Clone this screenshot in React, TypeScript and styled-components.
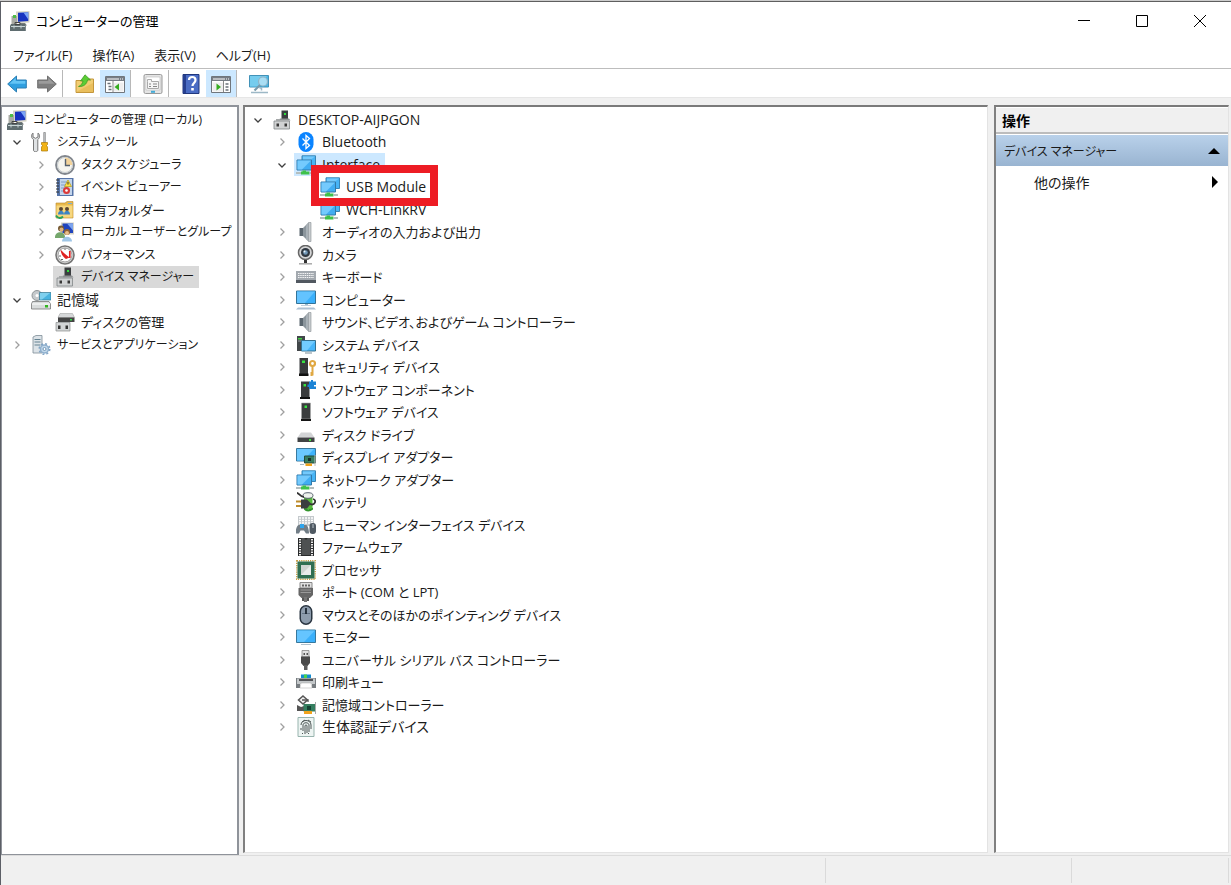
import React from 'react';
import styled, { createGlobalStyle, css } from 'styled-components';

const GlobalStyle = createGlobalStyle`
  *, *::before, *::after { box-sizing: border-box; }
  body {
    margin: 0;
    background: #f0f0f0;
    color: #1a1a1a;
    font-family: "Open Sans", "Noto Sans CJK JP", sans-serif;
    font-size: 13px;
    font-feature-settings: "palt";
  }
  ul { margin: 0; padding: 0; list-style: none; }
  button {
    margin: 0;
    padding: 0;
    border: 0;
    background: transparent;
    color: inherit;
    font: inherit;
    font-feature-settings: inherit;
    cursor: default;
  }
  svg { display: block; flex: none; }
`;

const Desktop = styled.div`
  display: flex;
  flex-direction: column;
  min-height: 100vh;
  padding-top: 1px;
  background: #cdcdcd;
`;

const Window = styled.div`
  display: flex;
  flex: 1;
  flex-direction: column;
  border-top: 1px solid #5f5f5f;
  border-left: 1px solid #5c5f66;
  background: #f0f0f0;
`;

const TitleBar = styled.header`
  display: flex;
  align-items: center;
  height: 38px;
  padding: 0 2px 0 9px;
  gap: 6px;
  background: #fff;
  color: #000;
`;

const Title = styled.h1`
  flex: 1;
  margin: 0;
  font-size: 13px;
  font-weight: 400;
  line-height: 20px;
`;

const WindowControls = styled.div`
  display: flex;
  height: 100%;
`;

const WindowButton = styled.button`
  display: grid;
  place-items: center;
  width: 58px;
`;

const MenuBar = styled.nav`
  display: flex;
  height: 28px;
  padding-left: 2px;
  background: #fff;
`;

const MenuButton = styled.button`
  padding: 1px 10px 0;
  line-height: 28px;
  white-space: nowrap;
`;

const ToolBar = styled.div`
  display: flex;
  height: 30px;
  padding: 1px 0 0 1px;
  border-top: 1px solid #bdbdbd;
  border-bottom: 1px solid #e6e6e6;
  background: #fff;
`;

const ToolButton = styled.button<{ $active?: boolean }>`
  display: grid;
  place-items: center;
  width: 30px;
  background: ${(p) => (p.$active ? '#cce8ff' : 'transparent')};
`;

const ToolSeparator = styled.span`
  width: 1px;
  margin-right: 7px;
  background: #b8b8b8;
`;

const Panes = styled.main`
  display: grid;
  flex: 1;
  grid-template-columns: 238px minmax(0, 1fr) 239px;
  gap: 4px;
  padding-top: 7px;
`;

const sunken = css`
  border-style: solid;
  border-width: 2px 1px 1px 2px;
  border-color: #7a7a7a #e3e3e3 #e3e3e3 #808080;
`;

const NavPane = styled.nav`
  padding: 1px 2px 1px 3px;
  border: 2px solid #8f939a;
  border-left-width: 1px;
  border-bottom-width: 1px;
  background: #fff;
`;

const DevicePane = styled.section`
  ${sunken}
  margin-bottom: 2px;
  padding: 1px;
  background: #fff;
`;

const ActionPane = styled.aside`
  ${sunken}
  margin: 0 2px 2px 2px;
  padding: 1px 0;
  background: #fff;
`;

const Row = styled.li<{ $indent: number }>`
  display: flex;
  height: 22px;
  padding-left: ${(p) => p.$indent * 24}px;
  &:nth-child(odd) { height: 23px; }
`;

const Toggle = styled.button`
  display: grid;
  flex: none;
  place-items: center;
  width: 24px;
`;

const ToggleSpace = styled.span`
  flex: none;
  width: 24px;
`;

const boxed = css`
  &::before {
    content: "";
    position: absolute;
    z-index: -1;
    inset: -11px -7px -8px -7px;
    border: 8px solid #ed1c24;
    background: #fff;
  }
`;

const Item = styled.button<{ $size?: number; $fill?: string; $boxed?: boolean }>`
  position: relative;
  z-index: ${(p) => (p.$boxed ? 1 : 'auto')};
  display: flex;
  flex: none;
  align-items: center;
  gap: 6px;
  padding: 0 5px 0 2px;
  background: ${(p) => p.$fill || 'transparent'};
  font-size: ${(p) => p.$size || 13}px;
  line-height: 22px;
  white-space: nowrap;
  ${(p) => p.$boxed && boxed}
`;

const ActionHeading = styled.h2`
  margin: 0;
  padding: 2px 0 0 6px;
  border-bottom: 2px solid #bcbcbc;
  background: #f0f0f0;
  color: #000;
  font-size: 14px;
  font-weight: 700;
  line-height: 22px;
`;

const ActionGroup = styled.button`
  display: flex;
  align-items: center;
  justify-content: space-between;
  width: 100%;
  height: 31px;
  margin-top: 1px;
  padding: 0 8px;
  background: linear-gradient(#b9d1ea, #99b4d1);
  font-size: 12px;
`;

const ActionItem = styled(ActionGroup)`
  margin-top: 0;
  padding-left: 38px;
  background: transparent;
  font-size: 14px;
`;

const StatusBar = styled.footer`
  display: grid;
  grid-template-columns: minmax(0, 1fr) 246px 157px 2px;
  height: 30px;
  border-top: 1px solid #dcdcdc;
`;

const StatusCell = styled.span`
  margin: 2px 0;
  border-right: 1px solid #dadada;
`;

/* ---- Drawings ---- */

const pictures: Record<string, React.ReactNode> = {
  management: (
    <>
      <path d="M6 .5 19.500 0v11.500l-13 .7z" fill="#d6d4c4" />
      <path d="M8 1.800 18.300 1.300v8.800L8 10.800z" fill="#1733c0" />
      <path d="m9.500 1.800 4-.2 4.800 7V1.300z" fill="#7ba4f6" />
      <path d="M1.500 5h5.500v9H1.500z" fill="#a8aaa4" />
      <path d="M3 4h3v3H3z" fill="#4fbd45" />
      <path d="M10 12h5l2 2.500H9z" fill="#777d7b" />
      <path d="M1 13h14l.8 2v5H0v-5z" fill="#5f6d70" />
      <path d="M5 11.500h5v2H5z" fill="none" stroke="#444" />
      <path d="M1 15.500h14M4 14.500v3m7-3v3" stroke="#c9d5d6" />
    </>
  ),
  tools: (
    <>
      <path d="M2 1v4l2.500 1.300L7 5V1c2.200 1.500 2 5-.2 6.500V18c0 2.400-4.300 2.400-4.300 0V7.500C0 6 0 2.500 2 1z" fill="#dfe2e4" stroke="#777" />
      <path d="M12.700.5h1.700v10h-1.700z" fill="#c4c7ca" stroke="#777" strokeWidth=".6" />
      <path d="M10.500 10.500h6v2l-1 1 1 1.500v4h-6v-4l1-1.500-1-1z" fill="#f2b315" stroke="#a97908" strokeWidth=".7" />
    </>
  ),
  clock: (
    <>
      <circle cx="10" cy="10" r="9" fill="#f0eee6" stroke="#81868d" strokeWidth="1.800" />
      <circle cx="10" cy="10" r="7.500" fill="#f6f5ef" stroke="#c5cbd0" />
      <path d="M10 10V2.500a7.500 7.500 0 0 1 7.500 7.500z" fill="#f3d39a" />
      <path d="M10.500 4v6.500H15" fill="none" stroke="#56616d" strokeWidth="1.400" />
    </>
  ),
  events: (
    <>
      <path d="M2 1h16.500v18H2z" fill="#5674a8" />
      <path d="M5 2h12v16H5z" fill="#c3d5ec" />
      <path d="M6 5h6m-6 3h5m-5 3h5m-5 3h3" stroke="#7e9fc8" />
      <path d="M1 3h3M1 6h3M1 9h3m-3 3h3m-3 3h3" stroke="#333" />
      <path d="m13 3 3.500 6.500h-7z" fill="#ffe044" stroke="#a98e00" strokeWidth=".6" />
      <path d="M13 5v2.500" stroke="#333" />
      <circle cx="11.500" cy="13.500" r="3.500" fill="#db3a3a" />
      <circle cx="11.500" cy="13.500" r="1.300" fill="#fff" />
    </>
  ),
  shared: (
    <>
      <path d="M1 3h9l2-1.500h6V18H1z" fill="#e9b94b" stroke="#b8862c" strokeWidth=".6" />
      <path d="M1.500 5.500h16V17.500h-16z" fill="#f7d77e" />
      <path d="M13 3.500h4" stroke="#79aed4" />
      <circle cx="6" cy="9" r="2" fill="#5a4632" />
      <circle cx="12" cy="9" r="2" fill="#5a4632" />
      <path d="M3 14.500c0-5 6-5 6 0zm6 0c0-5 6-5 6 0z" fill="#3c84c4" />
      <path d="M1 15.500c2 3.500 5 3 7 1" fill="none" stroke="#2ca35b" strokeWidth="1.900" />
    </>
  ),
  users: (
    <>
      <path d="M6 .5h13v12H6z" fill="#d5d3c8" />
      <path d="M7.500 1.500H18v9.500H7.500z" fill="#2044bd" />
      <path d="m12 1.500 6 7v-7z" fill="#7ca4ef" />
      <circle cx="6" cy="6.500" r="3" fill="#765a35" />
      <circle cx="6.500" cy="7.500" r="2" fill="#e0b37e" />
      <path d="M0 15c0-6.500 10-6.500 10 0v1H0z" fill="#75a76c" />
      <circle cx="12" cy="10" r="3" fill="#8f6333" />
      <circle cx="12" cy="11" r="2" fill="#eac08c" />
      <path d="M7 19.500c0-6.500 10-6.500 10 0z" fill="#9fc6e6" />
    </>
  ),
  gauge: (
    <>
      <circle cx="10" cy="10" r="9" fill="#e3e3e3" stroke="#757575" strokeWidth="1.600" />
      <circle cx="10" cy="10" r="7" fill="#fff" stroke="#999" />
      <path d="M5.500 4.500c.5 4.500 2.500 7.500 5.500 9.500l3.500-1.500C11 10 8.500 7.500 5.500 4.500z" fill="#df2222" />
      <path d="M14.800 6v7" stroke="#df2222" strokeWidth="1.700" />
      <path d="M5 12v-2M10 5V3.500M6 14.500h2" stroke="#666" />
    </>
  ),
  device: (
    <>
      <path d="M9.500.5h6.500V9H9.500z" fill="#3a3d3f" />
      <path d="M12 3h2v2h-2z" fill="#30df3d" />
      <path d="M8 8.500h9l1.500 2H6.500z" fill="#8f9293" />
      <path d="M2 11h15.500v8H2z" fill="#d0d2d3" stroke="#828688" strokeWidth=".8" />
      <path d="M4 9h4v2H4z" fill="#a5a8a9" />
      <path d="M4.500 13.500h2.500v3H4.500zm8 0H15v3h-2.500z" fill="#383838" />
    </>
  ),
  storage: (
    <>
      <ellipse cx="6" cy="5.500" rx="5" ry="5" fill="#c5c9cc" stroke="#8e9497" />
      <circle cx="6" cy="5.500" r="1.500" fill="#fff" />
      <path d="M8.500 2.500H20V10H8.500z" fill="#49b3df" stroke="#3b7890" strokeWidth=".7" />
      <path d="M9 3h10l-8 6.500H9z" fill="#7fd0ee" />
      <path d="M1.500 11.500h16.500l1.500 2.500v5H.5v-5z" fill="#d9dcdc" stroke="#777" strokeWidth=".8" />
      <path d="M1 14h18" stroke="#fff" />
      <path d="M14 15h3v2.500h-3z" fill="#31b51f" />
    </>
  ),
  diskManage: (
    <>
      <path d="M5 1.500h12.500l2 4H3z" fill="#d6d8d9" stroke="#999" strokeWidth=".5" />
      <path d="M3 5.500h16.500V10H3z" fill="#444" />
      <path d="M15 7h2v1.500h-2z" fill="#38d94b" />
      <path d="M1 10.500h14V19H1z" fill="#d2d4d5" stroke="#898c8e" strokeWidth=".7" />
      <path d="M3 13.500h2.500V17H3zm7.500 0H13V17h-2.500z" fill="#333" />
    </>
  ),
  services: (
    <>
      <path d="M2 2 5 .5h6V18H2z" fill="#dce3e8" stroke="#7e8d97" strokeWidth=".8" />
      <path d="M3.500 4.500h6M3.500 7h6m-6 3h6" stroke="#648291" />
      <circle cx="13.500" cy="14" r="4" fill="#c2d8ea" stroke="#8fb0ce" strokeWidth="1.500" />
      <circle cx="13.500" cy="14" r="5.300" fill="none" stroke="#7fa3c4" strokeWidth="1.500" strokeDasharray="2 2.160" />
      <circle cx="13.500" cy="14" r="1.500" fill="#fff" stroke="#7196b8" />
    </>
  ),
  bluetooth: (
    <>
      <rect x="2.500" y="0" width="15" height="20" rx="7.500" fill="#0a84ff" />
      <path d="m6.500 6.500 7 7-3.500 3v-13l3.500 3-7 7" fill="none" stroke="#fff" strokeWidth="1.300" />
    </>
  ),
  network: (
    <>
      <path d="M6 .8h13.500v10.700H6z" fill="#48b4f5" stroke="#3a85b4" />
      <path d="M7 1.500h12l-8 6H7z" fill="#74c9fb" />
      <path d="M1 5h14.500v10H1z" fill="#41adf2" stroke="#3279a8" />
      <path d="M1.500 5.500H15L6 14.500H1.500z" fill="#74cafd" />
      <path d="M6.500 15.500H10v1h3.500v3H5v-3h1.500z" fill="#3fc14b" />
      <path d="M0 18h5m8.500 0h4.500" stroke="#b4bebe" strokeWidth="2" />
    </>
  ),
  speaker: (
    <>
      <path d="M3.500 6H8v8H3.500z" fill="#5b666f" />
      <path d="M7 6 12.500.5v19L7 14z" fill="#8b959c" />
      <path d="M10 3.500 12.500.5v19L10 17z" fill="#a9b1b7" />
      <path d="M12.500.5H15v19h-2.500z" fill="#c8cccf" stroke="#8a9196" strokeWidth=".6" />
    </>
  ),
  camera: (
    <>
      <circle cx="9.500" cy="7.500" r="7" fill="#d5d6d7" stroke="#666" strokeWidth="1.500" />
      <circle cx="9.500" cy="7.500" r="4.500" fill="#303841" />
      <circle cx="9.500" cy="7.500" r="2.300" fill="#7298b7" />
      <circle cx="8.500" cy="6.500" r="1" fill="#edf7ff" />
      <path d="M8 15h3v3H8z" fill="#333" />
      <path d="M3 18.800h13" stroke="#aaa" strokeWidth="1.500" />
    </>
  ),
  keyboard: (
    <>
      <path d="M0 4h20v12H0z" fill="#a3a9af" />
      <path d="M0 13h20v3H0z" fill="#515860" />
      <path d="M2 6.500h16M2 8.500h16M2 10.500h16" stroke="#f4f5f6" strokeDasharray="1.500 .7" strokeWidth="1.200" />
    </>
  ),
  computer: (
    <>
      <path d="M.5 1h19v12.500H.5z" fill="#3bb0fb" stroke="#337398" />
      <path d="M1 1.500h18L9 13H1z" fill="#63c3ff" />
      <path d="M9 14h3v2H9z" fill="#9cbdd0" />
      <path d="M2 17.500h16l2 2H0z" fill="#aec1d3" />
      <path d="M5 15.500h10" stroke="#c0cdda" />
    </>
  ),
  system: (
    <>
      <path d="M1 1h8v15H1z" fill="#42474a" />
      <path d="M2 3h4v1.500H2z" fill="#43d141" />
      <path d="M2 6h4" stroke="#90999e" />
      <path d="M5.500 5.500h14V16h-14z" fill="#48b6fa" stroke="#35718f" />
      <path d="M6 6h13l-8 9.500H6z" fill="#72ccff" />
      <path d="M9 18h7" stroke="#a7b3ba" strokeWidth="1.500" />
    </>
  ),
  security: (
    <>
      <path d="M3.500 1H12v16H3.500z" fill="#393b3c" />
      <path d="M6 3.500h3V6H6z" fill="#37e341" />
      <path d="M3 16.500h9.500V19H3z" fill="#111" />
      <circle cx="16.500" cy="6.500" r="2.500" fill="none" stroke="#e0a842" strokeWidth="2.200" />
      <path d="M16.500 9v9.500m0-2.500h-2m2 2h-2" stroke="#e0a842" strokeWidth="2" />
    </>
  ),
  component: (
    <>
      <path d="M5 1.500h8.500V17H5z" fill="#393b3c" />
      <path d="M7.500 4H10v2.500H7.500z" fill="#37e341" />
      <path d="M4 17h10v2H4z" fill="#111" />
      <path d="M13 1.500h2V0h2v1.500h3V5h-2v1.500h2V9h-7V7h-1.500V4.500H13z" fill="#1b83d5" />
    </>
  ),
  software: (
    <>
      <path d="M5.500 1h9v16h-9z" fill="#3b3d3e" stroke="#aaa" strokeWidth=".6" />
      <path d="M8.500 3.500h2.500V6H8.500z" fill="#37e341" />
      <path d="M5 17h10v2H5z" fill="#151515" />
    </>
  ),
  drive: (
    <>
      <path d="M5 7.500h10l3.500 5h-17z" fill="#d3d4d6" />
      <path d="M1.500 12.500h17V17h-17z" fill="#404244" />
      <path d="M13 14h2v2h-2z" fill="#3fe33f" />
    </>
  ),
  display: (
    <>
      <path d="M.5 1.500h19V14H.5z" fill="#3eb2fb" stroke="#397aa0" />
      <path d="M1 2h17L7 13.500H1z" fill="#6bc8ff" />
      <path d="M8.500 9h11v7h-11z" fill="#377e60" stroke="#244c3c" />
      <path d="M12 11h3v3h-3z" fill="#192f29" />
      <path d="M9.500 16.500H16V19H9.500z" fill="#efa11a" />
      <path d="M4 17.500h4" stroke="#a7b7c1" />
      <path d="M19 8v11" stroke="#bcc0be" />
    </>
  ),
  battery: (
    <>
      <path d="M8 2.500h8.500V17H8z" fill="#57ba3d" />
      <ellipse cx="12" cy="3.500" rx="5" ry="2.800" fill="#eef1ed" stroke="#596270" />
      <path d="M8 15.500c2 2.500 7 2 9 0v2c-3 2.500-7 2.500-9 0z" fill="#32942c" />
      <path d="M1 1c2 0 3 4 7 4M17 7c4 1 2 7-3 5" fill="none" stroke="#333" strokeWidth="1.800" />
      <path d="M5 7.500h6l4 4-4 5H5z" fill="#3b3e40" />
      <path d="M0 9.500h5M0 14h5" stroke="#bd8c2c" strokeWidth="2" />
    </>
  ),
  hid: (
    <>
      <path d="M2 1h16v10H2z" fill="#c4c9cc" />
      <path d="M3 3h14M3 5.500h14M3 8h14" stroke="#fff" strokeDasharray="2 1" strokeWidth="1.300" />
      <path d="M0 18.500c-1-3 1-8.500 3-8.500h7c2 0 3 5.500 3 8.500H10l-2-3H4.500l-1.500 3z" fill="#717d86" />
      <path d="M4 9h4v4H4z" fill="#2fa5ed" />
      <rect x="13.500" y="8" width="6.500" height="11" rx="3" fill="#4f5962" />
      <path d="M17 9v4" stroke="#bac3ca" />
    </>
  ),
  firmware: (
    <>
      <path d="M2 1h16v18H2z" fill="#282a2b" />
      <path d="M4 2v17M16 2v17" stroke="#ececec" strokeWidth="2" strokeDasharray="1.500 1" />
      <path d="M5.500 1h3c0 2 3 2 3 0h3v17h-9z" fill="#4e5152" />
    </>
  ),
  processor: (
    <>
      <path d="M.8.8h18.400v18.400H.8z" fill="none" stroke="#c69e46" strokeWidth="1.500" strokeDasharray="1.200 1" />
      <path d="M1.500 1.500h17v17h-17z" fill="#2f6f52" />
      <path d="M5 5h10v10H5z" fill="#cfd4d1" />
      <path d="M15 5v10H5z" fill="#e9ebea" />
    </>
  ),
  port: (
    <>
      <path d="M4 .5h12V6H4z" fill="#e0e0e0" stroke="#888" />
      <path d="M6 2.500h2v2H6zm3 0h2v2H9zm3 0h2v2h-2z" fill="#666" />
      <path d="M2.500 6H17v7l-3 3H5.500l-3-3z" fill="#666" />
      <path d="M4.500 8H15M4.500 10.500H15" stroke="#999" />
      <path d="M6 16h2v3H6zm5 0h2v3h-2z" fill="#555" />
      <path d="M8 15h3v5H8z" fill="#777" />
    </>
  ),
  mouse: (
    <>
      <rect x="3.500" y="0" width="13" height="20" rx="6.500" fill="#293440" />
      <rect x="5" y="1.500" width="10" height="17" rx="5" fill="#8d9cad" />
      <path d="M6 8.500h8" stroke="#637386" />
      <path d="M10 3v6" stroke="#15202b" strokeWidth="1.700" />
    </>
  ),
  monitor: (
    <>
      <path d="M.5 3h19v12.500H.5z" fill="#3bb0fb" stroke="#37789d" />
      <path d="M1 3.500h18L8 15H1z" fill="#65c5ff" />
      <path d="M5 17.500h10" stroke="#b0c1cd" />
    </>
  ),
  usb: (
    <>
      <path d="M6 .5h7V7H6z" fill="#e1e1e1" stroke="#888" strokeWidth=".8" />
      <path d="M7.500 3h1.500v2H7.500zm3 0H12v2h-1.500z" fill="#555" />
      <path d="M5 6.500h9v6.500L11.500 16h-4L5 13z" fill="#4a4a4a" />
      <path d="M8 15h3.500v5H8z" fill="#5d5d5d" />
    </>
  ),
  printer: (
    <>
      <path d="M5 2.500h10V7H5z" fill="#148cd0" />
      <path d="M8 2.500h3V7H8z" fill="#49d24b" />
      <path d="M0 6h20v10h-4v-4H4v4H0z" fill="#777c80" />
      <path d="M1 6.500h18V12H1z" fill="#c3c7c9" />
      <path d="M3 8h14" stroke="#2b2d2f" strokeWidth="1.500" />
      <path d="M5 11h10l1 5H4z" fill="#fff" stroke="#aaa" strokeWidth=".5" />
    </>
  ),
  controller: (
    <>
      <path d="m7 1 4.500 4L7 9 2.500 5z" fill="#f3f3f3" stroke="#555" strokeWidth="1.500" />
      <path d="M6 5h6v2" fill="none" stroke="#555" strokeWidth="1.300" />
      <path d="m1 10 4 2 3-1v5H1z" fill="#555" />
      <path d="M7.500 9H19v7.500H7.500z" fill="#357f60" />
      <path d="M11 11h4v4h-4z" fill="#164434" />
      <path d="M8 16h8v3H8z" fill="#f0a31b" />
      <path d="M19.500 7v12" stroke="#aaa" />
    </>
  ),
  fingerprint: (
    <>
      <path d="M2 .5h16v19H2z" fill="#edf4f2" stroke="#98b4ae" />
      <path d="M5 8c0-6 10-6 10 0v4M7 14V8c0-3 6-3 6 0v7M5 11v2m4 4V9c0-1.500 2-1.500 2 0v7M6 16l1 1m5 0 1-1M6 5l3-2m3 0 3 2" fill="none" stroke="#4e5756" />
    </>
  ),
  back: (
    <>
      <path d="M.7 10 9.500 2v4H19.300v8H9.500v4z" fill="#2f9fe0" stroke="#2c7fb4" strokeLinejoin="round" />
      <path d="M2.500 9.800 8.700 4v3h9.600v2.800z" fill="#63c4f5" />
    </>
  ),
  forward: (
    <>
      <path d="M19.300 10 10.500 2v4H.7v8h9.800v4z" fill="#7f7f7f" stroke="#707070" strokeLinejoin="round" />
      <path d="M17.500 9.800 11.300 4v3H1.700v2.800z" fill="#9c9c9c" />
    </>
  ),
  folderUp: (
    <>
      <path d="M1 6.500h8L10.500 5H18.500v13.500H1z" fill="#f2cd72" stroke="#c4963b" />
      <path d="M2 17.500 18 9v9H2z" fill="#e2b44f" opacity=".6" />
      <path d="M3.500 12.500C6 11.500 7.500 9.500 8 7H5.500L10 .8 15.500 6h-3c-.5 4-4 7-9 6.500z" fill="#5bcd35" stroke="#38941e" strokeWidth=".7" />
    </>
  ),
  treeWindow: (
    <>
      <path d="M.5 2.500h19v16H.5z" fill="#fff" stroke="#70767c" />
      <path d="M1 3h18v4H1z" fill="#767d85" />
      <path d="M2 5h12m1 0h1m1 0h1" stroke="#fff" />
      <path d="M8 7v11" stroke="#888" />
      <path d="M2.500 9.500h3m-2 3h3m-3 3h3" stroke="#687077" strokeWidth="1.500" />
      <path d="M9 8.500h9.500v9H9z" fill="#eee" />
      <path d="m14 9.500-4.500 3.500 4.500 3.500z" fill="#35ad20" />
    </>
  ),
  actionWindow: (
    <>
      <path d="M.5 2.500h19v16H.5z" fill="#fff" stroke="#70767c" />
      <path d="M1 3h18v4H1z" fill="#767d85" />
      <path d="M2 5h12m1 0h1m1 0h1" stroke="#fff" />
      <path d="M1.500 8.500H12v9H1.500z" fill="#eee" />
      <path d="M12.500 7v11" stroke="#888" />
      <path d="M14.500 10h3m-3 3h3m-3 3h3" stroke="#687077" strokeWidth="1.500" />
      <path d="m5.500 9.500 4.500 3.500-4.500 3.500z" fill="#35ad20" />
    </>
  ),
  properties: (
    <>
      <rect x="1" y=".5" width="18" height="19" rx="1.500" fill="#e4e4e4" stroke="#999" />
      <path d="M3 3h14v13H3z" fill="#fff" stroke="#bbb" strokeWidth=".6" />
      <path d="M4.500 7.500v-2h4v2h7v7h-11z" fill="#f6f6f6" stroke="#aaa" />
      <path d="M6 10h2m2 0h4M6 12.500h2m2 0h4" stroke="#888" />
      <path d="M8 17.800h4" stroke="#42abd8" strokeWidth="2" />
    </>
  ),
  help: (
    <>
      <path d="M2 .5h16v19H2z" fill="#4a6cc4" stroke="#20377d" />
      <path d="M2 1h3v18H2z" fill="#263f90" />
      <path d="M8 6c0-4 6.500-4 6.500 0 0 3-3 3-3 6" fill="none" stroke="#fff" strokeWidth="2.200" />
      <path d="M10.200 14h2.600v2.500h-2.600z" fill="#fff" />
    </>
  ),
  scan: (
    <>
      <path d="M.5 1.500h19v11.500H.5z" fill="#48b7e6" stroke="#4292b8" />
      <path d="M1 2h17L9 12.500H1z" fill="#75ccee" />
      <circle cx="14" cy="7.500" r="4.500" fill="#a9def4" stroke="#8fb3c6" strokeWidth="1.200" />
      <path d="m11 11-5.500 5.500" stroke="#799bac" strokeWidth="2.200" />
      <path d="M10.500 14h2v2.500M2 18.500h17" stroke="#9db8c6" strokeWidth="1.500" fill="none" />
    </>
  ),
};

function Picture({ name }: { name: string }) {
  return (
    <svg width="20" height="20" viewBox="0 0 20 20" aria-hidden="true">
      {pictures[name]}
    </svg>
  );
}

function Chevron({ open }: { open?: boolean }) {
  return (
    <svg width="10" height="10" viewBox="0 0 10 10" fill="none" aria-hidden="true">
      {open ? (
        <path d="m1.500 3.500 3.500 3.500 3.500-3.500" stroke="#404040" strokeWidth="1.300" />
      ) : (
        <path d="m3.500 1.500 3.500 3.500-3.500 3.500" stroke="#a0a0a0" strokeWidth="1.300" />
      )}
    </svg>
  );
}

/* ---- Data ---- */

type Node = {
  icon: string;
  label: string;
  indent?: number;
  state?: 'open' | 'closed' | 'leaf';
  size?: number;
  fill?: string;
  boxed?: boolean;
};

const navigation: Node[] = [
  { icon: 'tools', label: 'システム ツール', size: 12, state: 'open' },
  { icon: 'clock', label: 'タスク スケジューラ', size: 12, indent: 1 },
  { icon: 'events', label: 'イベント ビューアー', size: 12, indent: 1 },
  { icon: 'shared', label: '共有フォルダー', indent: 1 },
  { icon: 'users', label: 'ローカル ユーザーとグループ', size: 12, indent: 1 },
  { icon: 'gauge', label: 'パフォーマンス', size: 12, indent: 1 },
  { icon: 'device', label: 'デバイス マネージャー', size: 12, indent: 1, state: 'leaf', fill: '#d9d9d9' },
  { icon: 'storage', label: '記憶域', size: 14, state: 'open' },
  { icon: 'diskManage', label: 'ディスクの管理', indent: 1, state: 'leaf' },
  { icon: 'services', label: 'サービスとアプリケーション', size: 12 },
];

const devices: Node[] = [
  { icon: 'device', label: 'DESKTOP-AIJPGON', size: 14, indent: 0, state: 'open' },
  { icon: 'bluetooth', label: 'Bluetooth', size: 14, indent: 1 },
  { icon: 'network', label: 'Interface', size: 14, indent: 1, state: 'open', fill: '#cce8ff' },
  { icon: 'network', label: 'USB Module', size: 14, indent: 2, state: 'leaf', boxed: true },
  { icon: 'network', label: 'WCH-LinkRV', size: 14, indent: 2, state: 'leaf' },
  { icon: 'speaker', label: 'オーディオの入力および出力', indent: 1 },
  { icon: 'camera', label: 'カメラ', indent: 1 },
  { icon: 'keyboard', label: 'キーボード', indent: 1 },
  { icon: 'computer', label: 'コンピューター', indent: 1 },
  { icon: 'speaker', label: 'サウンド、ビデオ、およびゲーム コントローラー', indent: 1 },
  { icon: 'system', label: 'システム デバイス', indent: 1 },
  { icon: 'security', label: 'セキュリティ デバイス', indent: 1 },
  { icon: 'component', label: 'ソフトウェア コンポーネント', indent: 1 },
  { icon: 'software', label: 'ソフトウェア デバイス', indent: 1 },
  { icon: 'drive', label: 'ディスク ドライブ', indent: 1 },
  { icon: 'display', label: 'ディスプレイ アダプター', indent: 1 },
  { icon: 'network', label: 'ネットワーク アダプター', indent: 1 },
  { icon: 'battery', label: 'バッテリ', indent: 1 },
  { icon: 'hid', label: 'ヒューマン インターフェイス デバイス', indent: 1 },
  { icon: 'firmware', label: 'ファームウェア', indent: 1 },
  { icon: 'processor', label: 'プロセッサ', indent: 1 },
  { icon: 'port', label: 'ポート (COM と LPT)', indent: 1 },
  { icon: 'mouse', label: 'マウスとそのほかのポインティング デバイス', indent: 1 },
  { icon: 'monitor', label: 'モニター', indent: 1 },
  { icon: 'usb', label: 'ユニバーサル シリアル バス コントローラー', indent: 1 },
  { icon: 'printer', label: '印刷キュー', indent: 1 },
  { icon: 'controller', label: '記憶域コントローラー', indent: 1 },
  { icon: 'fingerprint', label: '生体認証デバイス', size: 14, indent: 1 },
];

function TreeRow({ icon, label, indent = 0, state = 'closed', size, fill, boxed: isBoxed }: Node) {
  return (
    <Row $indent={indent}>
      {state === 'leaf' ? (
        <ToggleSpace />
      ) : (
        <Toggle type="button" aria-label={label} aria-expanded={state === 'open'}>
          <Chevron open={state === 'open'} />
        </Toggle>
      )}
      <Item type="button" $size={size} $fill={fill} $boxed={isBoxed}>
        <Picture name={icon} />
        {label}
      </Item>
    </Row>
  );
}

export default function App() {
  return (
    <Desktop>
      <GlobalStyle />
      <Window>
        <TitleBar>
          <Picture name="management" />
          <Title>コンピューターの管理</Title>
          <WindowControls>
            <WindowButton type="button" aria-label="最小化">
              <svg width="12" height="12" viewBox="0 0 12 12"><path d="M0 5.500h12" stroke="#000" /></svg>
            </WindowButton>
            <WindowButton type="button" aria-label="最大化">
              <svg width="12" height="12" viewBox="0 0 12 12"><path d="M.5.5h11v11H.5z" fill="none" stroke="#000" /></svg>
            </WindowButton>
            <WindowButton type="button" aria-label="閉じる">
              <svg width="12" height="12" viewBox="0 0 12 12"><path d="m0 0 12 12M12 0 0 12" stroke="#000" /></svg>
            </WindowButton>
          </WindowControls>
        </TitleBar>
        <MenuBar>
          {['ファイル(F)', '操作(A)', '表示(V)', 'ヘルプ(H)'].map((label) => (
            <MenuButton type="button" key={label}>{label}</MenuButton>
          ))}
        </MenuBar>
        <ToolBar>
          <ToolButton type="button" aria-label="戻る"><Picture name="back" /></ToolButton>
          <ToolButton type="button" aria-label="進む"><Picture name="forward" /></ToolButton>
          <ToolSeparator />
          <ToolButton type="button" aria-label="上へ"><Picture name="folderUp" /></ToolButton>
          <ToolButton type="button" aria-label="ツリー" $active><Picture name="treeWindow" /></ToolButton>
          <ToolSeparator />
          <ToolButton type="button" aria-label="プロパティ"><Picture name="properties" /></ToolButton>
          <ToolSeparator />
          <ToolButton type="button" aria-label="ヘルプ"><Picture name="help" /></ToolButton>
          <ToolButton type="button" aria-label="操作ウィンドウ" $active><Picture name="actionWindow" /></ToolButton>
          <ToolSeparator />
          <ToolButton type="button" aria-label="スキャン"><Picture name="scan" /></ToolButton>
        </ToolBar>
        <Panes>
          <NavPane>
            <ul>
              <Row $indent={0}>
                <Item type="button" $size={12}>
                  <Picture name="management" />
                  コンピューターの管理 (ローカル)
                </Item>
              </Row>
              {navigation.map((node) => <TreeRow key={node.label} {...node} />)}
            </ul>
          </NavPane>
          <DevicePane>
            <ul>
              {devices.map((node) => <TreeRow key={node.label} {...node} />)}
            </ul>
          </DevicePane>
          <ActionPane>
            <ActionHeading>操作</ActionHeading>
            <ActionGroup type="button">
              デバイス マネージャー
              <svg width="12" height="12" viewBox="0 0 12 12" aria-hidden="true"><path d="m6 3 6 6H0z" /></svg>
            </ActionGroup>
            <ActionItem type="button">
              他の操作
              <svg width="12" height="12" viewBox="0 0 12 12" aria-hidden="true"><path d="m4 0 6 6-6 6z" /></svg>
            </ActionItem>
          </ActionPane>
        </Panes>
        <StatusBar>
          <StatusCell />
          <StatusCell />
          <StatusCell />
        </StatusBar>
      </Window>
    </Desktop>
  );
}
